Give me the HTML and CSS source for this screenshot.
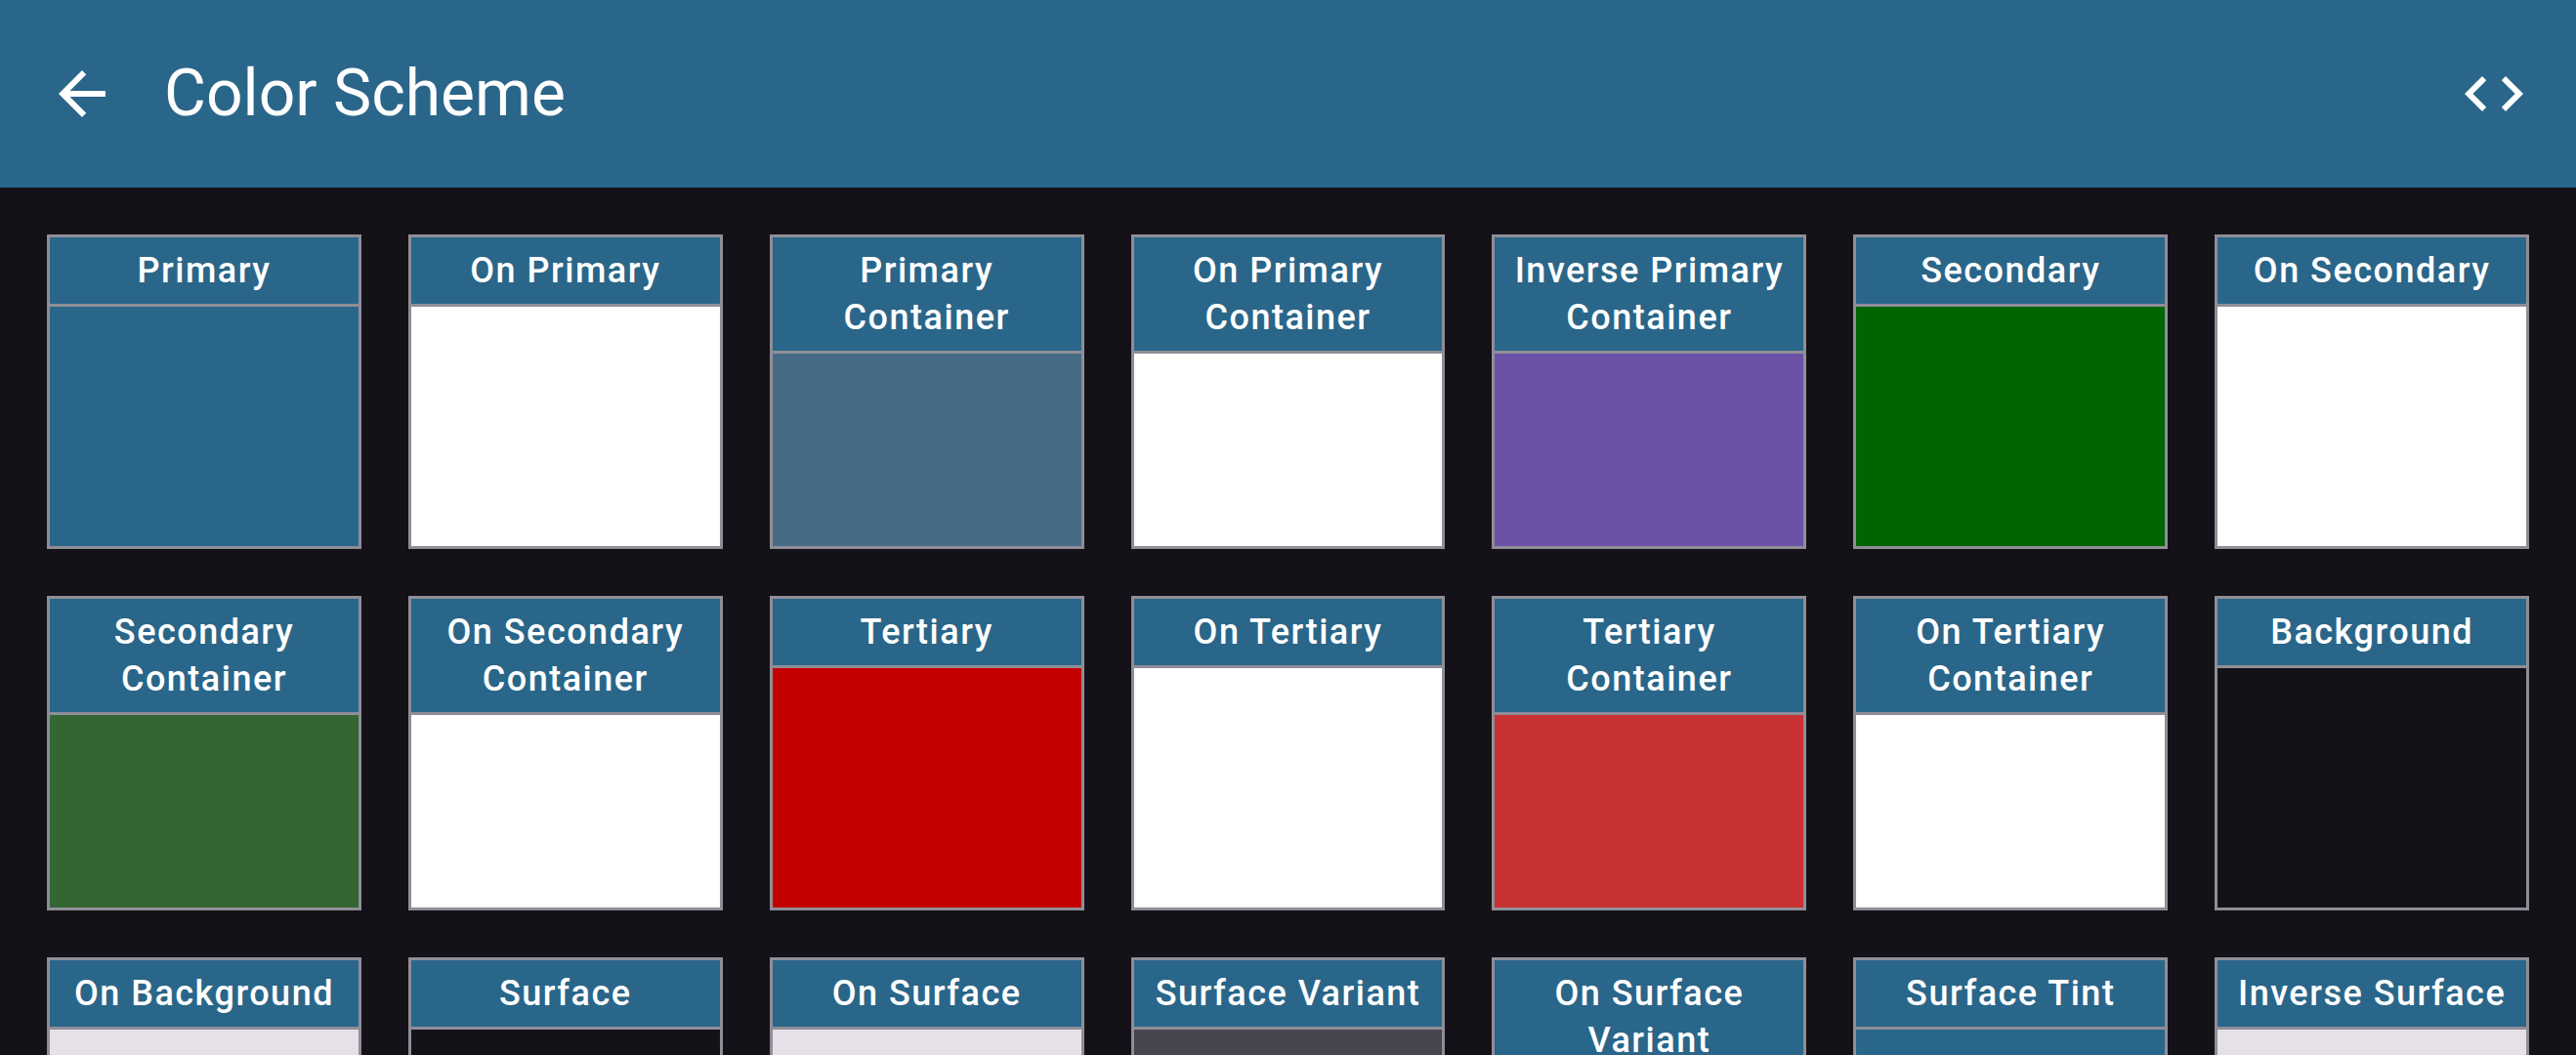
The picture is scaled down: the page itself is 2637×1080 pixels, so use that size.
FILE: index.html
```html
<!DOCTYPE html>
<html lang="en">
<head>
<meta charset="utf-8">
<title>Color Scheme</title>
<link rel="stylesheet" href="styles.css">
</head>
<body>
<header class="topbar">
  <button class="icon-btn" aria-label="Back">
    <svg viewBox="0 0 24 24" width="72" height="72"><path fill="#fff" d="M20 11H7.830l5.59-5.59L12 4l-8 8 8 8 1.41-1.41L7.83 13H20v-2z"/></svg>
  </button>
  <h1 class="title">Color Scheme</h1>
  <button class="icon-btn" aria-label="Code">
    <svg viewBox="0 0 24 24" width="72" height="72"><path fill="#fff" d="M9.4 16.6L4.8 12l4.6-4.6L8 6l-6 6 6 6 1.4-1.4zm5.2 0l4.6-4.6-4.6-4.6L16 6l6 6-6 6-1.4-1.4z"/></svg>
  </button>
</header>
<main class="grid">
  <div class="card"><div class="card-title">Primary</div><div class="swatch c-primary"></div></div>
  <div class="card"><div class="card-title">On Primary</div><div class="swatch c-white"></div></div>
  <div class="card"><div class="card-title">Primary Container</div><div class="swatch c-primary-container"></div></div>
  <div class="card"><div class="card-title">On Primary Container</div><div class="swatch c-white"></div></div>
  <div class="card"><div class="card-title">Inverse Primary Container</div><div class="swatch c-inverse-primary"></div></div>
  <div class="card"><div class="card-title">Secondary</div><div class="swatch c-secondary"></div></div>
  <div class="card"><div class="card-title">On Secondary</div><div class="swatch c-white"></div></div>

  <div class="card"><div class="card-title">Secondary Container</div><div class="swatch c-secondary-container"></div></div>
  <div class="card"><div class="card-title">On Secondary Container</div><div class="swatch c-white"></div></div>
  <div class="card"><div class="card-title">Tertiary</div><div class="swatch c-tertiary"></div></div>
  <div class="card"><div class="card-title">On Tertiary</div><div class="swatch c-white"></div></div>
  <div class="card"><div class="card-title">Tertiary Container</div><div class="swatch c-tertiary-container"></div></div>
  <div class="card"><div class="card-title">On Tertiary Container</div><div class="swatch c-white"></div></div>
  <div class="card"><div class="card-title">Background</div><div class="swatch c-background"></div></div>

  <div class="card"><div class="card-title">On Background</div><div class="swatch c-on-background"></div></div>
  <div class="card"><div class="card-title">Surface</div><div class="swatch c-background"></div></div>
  <div class="card"><div class="card-title">On Surface</div><div class="swatch c-on-background"></div></div>
  <div class="card"><div class="card-title">Surface Variant</div><div class="swatch c-surface-variant"></div></div>
  <div class="card"><div class="card-title">On Surface Variant</div><div class="swatch c-on-surface-variant"></div></div>
  <div class="card"><div class="card-title">Surface Tint</div><div class="swatch c-primary"></div></div>
  <div class="card"><div class="card-title">Inverse Surface</div><div class="swatch c-on-background"></div></div>
</main>
</body>
</html>
```
FILE: styles.css
```css
html, body {
  margin: 0;
  padding: 0;
  overflow: hidden;
}
body {
  background: #141218;
  font-family: Roboto, "Noto Sans", "Liberation Sans", sans-serif;
  color: #fff;
}
.topbar {
  height: 192px;
  background: #2a6689;
  display: flex;
  align-items: center;
  padding: 0 48px;
  box-sizing: border-box;
}
.icon-btn {
  width: 72px;
  height: 72px;
  padding: 0;
  border: 0;
  background: none;
  display: flex;
  align-items: center;
  justify-content: center;
  flex: none;
}
.icon-btn svg {
  display: block;
}
.title {
  flex: 1;
  margin: 0 0 0 48px;
  font-size: 66px;
  line-height: 84px;
  font-weight: 400;
  color: #fff;
}
.grid {
  display: grid;
  grid-template-columns: repeat(7, 1fr);
  gap: 48px;
  padding: 48px;
}
.card {
  aspect-ratio: 1 / 1;
  border: 3px solid #8f8e97;
  display: flex;
  flex-direction: column;
  box-sizing: border-box;
}
.card-title {
  background: #2a6689;
  border-bottom: 3px solid #8f8e97;
  padding: 10px 6px 10px;
  text-align: center;
  font-size: 36px;
  line-height: 48px;
  font-weight: 500;
  letter-spacing: 1.5px;
  color: #fff;
}
.swatch {
  flex: 1;
}
.c-primary { background: #2a6689; }
.c-white { background: #ffffff; }
.c-primary-container { background: #466c85; }
.c-inverse-primary { background: #6b52a6; }
.c-secondary { background: #006400; }
.c-secondary-container { background: #336633; }
.c-tertiary { background: #c40000; }
.c-tertiary-container { background: #c83232; }
.c-background { background: #141218; }
.c-on-background { background: #e6e0e9; }
.c-surface-variant { background: #49454f; }
.c-on-surface-variant { background: #cac4d0; }
```
